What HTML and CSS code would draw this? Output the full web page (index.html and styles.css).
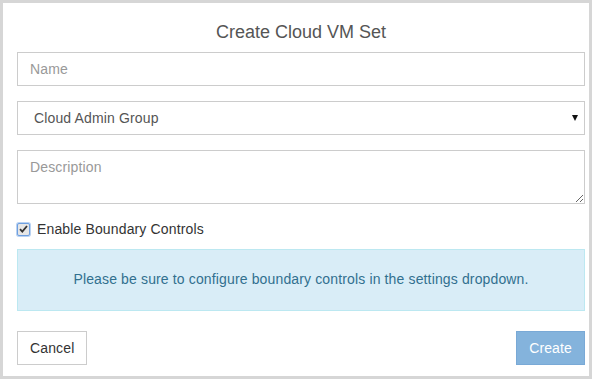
FILE: index.html
```html
<!DOCTYPE html>
<html>
<head>
<meta charset="utf-8">
<link rel="stylesheet" href="styles.css">
</head>
<body>
<div class="frame">
  <h1 class="title">Create Cloud VM Set</h1>
  <form class="form">
    <input class="field" type="text" placeholder="Name">
    <div class="select-wrap">
      <select class="field select">
        <option>Cloud Admin Group</option>
      </select>
    </div>
    <textarea class="field area" placeholder="Description"></textarea>
    <label class="check-row">
      <span class="checkbox">
        <svg width="9" height="8" viewBox="0 0 9 8"><path d="M1 4.2 L3.3 6.6 L8 1" fill="none" stroke="#333" stroke-width="1.8"/></svg>
      </span>
      <span>Enable Boundary Controls</span>
    </label>
    <div class="alert">Please be sure to configure boundary controls in the settings dropdown.</div>
    <div class="actions">
      <button type="button" class="btn">Cancel</button>
      <button type="button" class="btn primary">Create</button>
    </div>
  </form>
</div>
</body>
</html>
```
FILE: styles.css
```css
* { box-sizing: border-box; }
html, body { margin: 0; padding: 0; background: #fff; }
body { font-family: "Liberation Sans", Arial, sans-serif; font-size: 14px; color: #333; }
.frame {
  width: 592px;
  height: 379px;
  border: 3px solid #d6d6d6;
  padding: 0 4px 0 14px;
  background: #fff;
}
.title {
  margin: 0;
  height: 49px;
  padding-top: 19px;
  font-size: 18px;
  font-weight: normal;
  line-height: 20px;
  color: #555;
  text-align: center;
}
.form { display: flex; flex-direction: column; letter-spacing: 0.14px; }
.field {
  display: block;
  width: 100%;
  height: 34px;
  margin: 0 0 15px;
  padding: 6px 12px;
  border: 1px solid #ccc;
  border-radius: 0;
  background: #fff;
  font-family: inherit;
  font-size: 14px;
  letter-spacing: 0.14px;
  color: #555;
  outline: none;
}
.field::placeholder { color: #999; }
.select-wrap { position: relative; }
.select {
  -webkit-appearance: none;
  appearance: none;
  padding-left: 16px;
}
.select-wrap::after {
  content: "";
  position: absolute;
  right: 7px;
  top: 14px;
  border-left: 3.5px solid transparent;
  border-right: 3.5px solid transparent;
  border-top: 6px solid #111;
}
.area {
  height: 54px;
  resize: vertical;
  margin-bottom: 18px;
  padding-top: 8px;
}
.check-row {
  display: flex;
  align-items: center;
  gap: 7px;
  height: 14px;
  margin-bottom: 13px;
  color: #333;
}
.checkbox {
  width: 13px;
  height: 13px;
  border: 1px solid #6e9fe0;
  border-radius: 2px;
  background: #e6e6e6;
  display: flex;
  align-items: center;
  justify-content: center;
  box-shadow: 0 0 0 1px #b9d2f2;
}
.alert {
  height: 62px;
  margin-bottom: 20px;
  padding: 0 15px 2px;
  border: 1px solid #bce8f1;
  background: #d9edf7;
  color: #31708f;
  display: flex;
  align-items: center;
  justify-content: center;
}
.actions { display: flex; justify-content: space-between; }
.btn {
  height: 34px;
  padding: 6px 12px;
  border: 1px solid #ccc;
  border-radius: 0;
  background: #fff;
  color: #333;
  font-family: inherit;
  font-size: 14px;
  letter-spacing: 0.14px;
}
.primary {
  background: #84b3dc;
  border-color: #79a9d6;
  color: #fff;
}
```
